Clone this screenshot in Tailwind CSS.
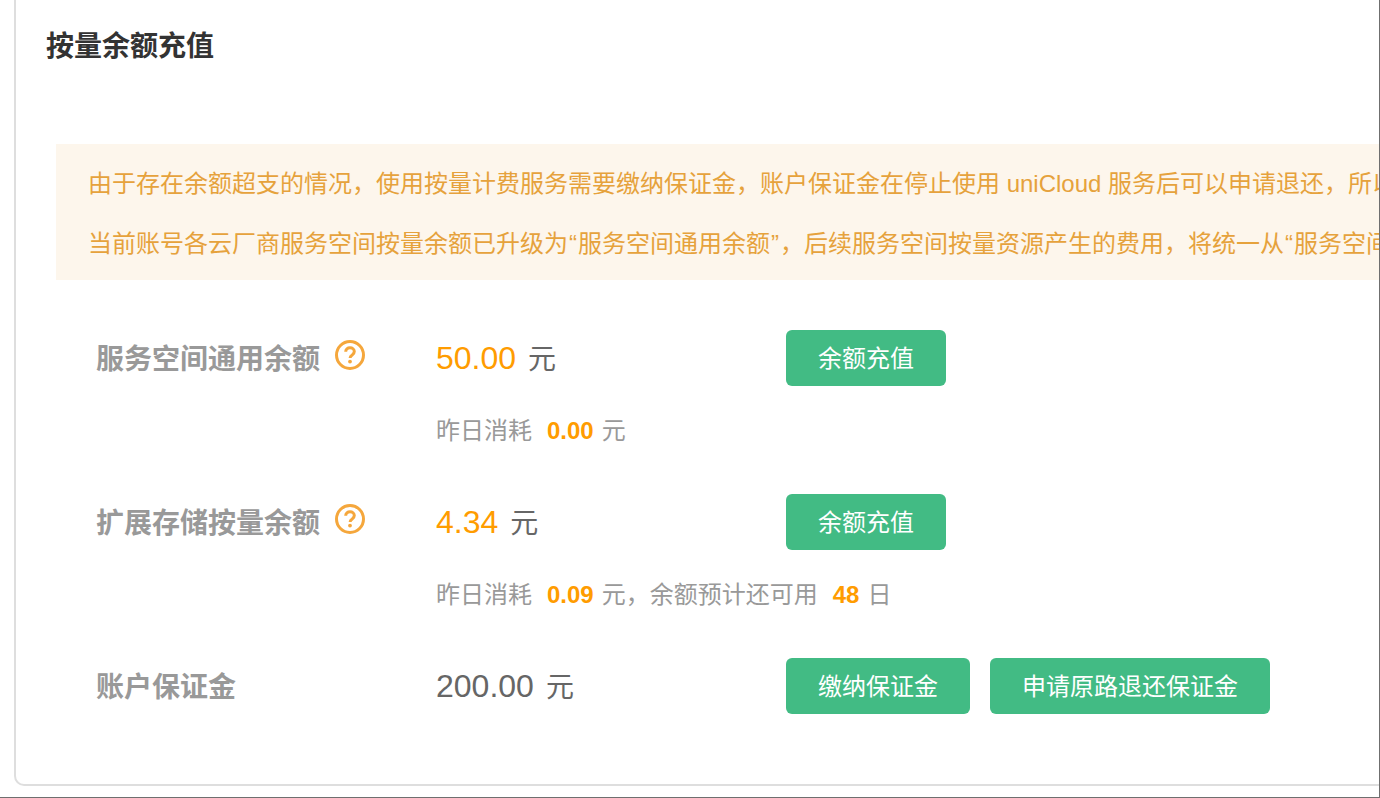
<!DOCTYPE html>
<html lang="zh-CN">
<head>
<meta charset="utf-8">
<script src="https://cdn.jsdelivr.net/npm/@tailwindcss/browser@4"></script>
</head>
<body class="bg-white">
<div class="w-[1380px] h-[798px] overflow-hidden bg-white border-r border-b border-[#6f6f6f] font-['Liberation_Sans','Noto_Sans_CJK_SC',sans-serif] pl-[14px]">
  <div class="w-[1400px] h-[786px] border-2 border-t-0 border-r-0 border-[#dedede] rounded-bl-[10px]">
    <h2 class="pl-[30px] pt-[27px] h-[144px] text-[28px] leading-[40px] font-bold text-[#333]">按量余额充值</h2>
    <div class="ml-[40px] h-[136px] bg-[#fdf6ec] pt-[10px] pl-[32px] text-[24px] leading-[60px] text-[#e6a23c] whitespace-nowrap overflow-hidden">
      <p>由于存在余额超支的情况，使用按量计费服务需要缴纳保证金，账户保证金在停止使用 uniCloud 服务后可以申请退还，所以</p>
      <p>当前账号各云厂商服务空间按量余额已升级为<span class="mx-[1px]">“</span>服务空间通用余额<span class="mx-[1px]">”</span>，后续服务空间按量资源产生的费用，将统一从<span class="mx-[1px]">“</span>服务空间</p>
    </div>

    <div class="pt-[50px]">
      <div class="h-[56px] flex items-center">
        <div class="w-[420px] pl-[80px] pt-[4px] flex items-center shrink-0">
          <span class="text-[28px] font-bold text-[#999] leading-[40px]">服务空间通用余额</span>
          <svg class="ml-[14px] -mt-[10px]" width="32" height="32" viewBox="0 0 32 32" fill="none"><circle cx="16" cy="16" r="13.5" stroke="#f5a73c" stroke-width="3"/><path d="M11.7 12.8c0-2.5 1.9-4 4.3-4s4.3 1.5 4.3 3.7c0 1.6-.8 2.5-2.1 3.4-1.4.9-2.1 1.6-2.1 3" stroke="#f5a73c" stroke-width="3" fill="none"/><circle cx="16" cy="22.6" r="1.9" fill="#f5a73c"/></svg>
        </div>
        <div class="w-[350px] shrink-0 flex items-baseline">
          <span class="text-[32px] text-[#ff9c00]">50.00</span>
          <span class="ml-[12px] text-[28px] text-[#666]">元</span>
        </div>
        <button class="w-[160px] h-[56px] pt-[2px] bg-[#42bb84] rounded-[6px] text-white text-[24px]">余额充值</button>
      </div>
      <div class="h-[108px] pl-[420px] pt-[28px] text-[24px] leading-[34px] text-[#999]">昨日消耗<span class="ml-[15px] font-bold text-[#ff9c00]">0.00</span><span class="ml-[8px]">元</span></div>

      <div class="h-[56px] flex items-center">
        <div class="w-[420px] pl-[80px] pt-[4px] flex items-center shrink-0">
          <span class="text-[28px] font-bold text-[#999] leading-[40px]">扩展存储按量余额</span>
          <svg class="ml-[14px] -mt-[10px]" width="32" height="32" viewBox="0 0 32 32" fill="none"><circle cx="16" cy="16" r="13.5" stroke="#f5a73c" stroke-width="3"/><path d="M11.7 12.8c0-2.5 1.9-4 4.3-4s4.3 1.5 4.3 3.7c0 1.6-.8 2.5-2.1 3.4-1.4.9-2.1 1.6-2.1 3" stroke="#f5a73c" stroke-width="3" fill="none"/><circle cx="16" cy="22.6" r="1.9" fill="#f5a73c"/></svg>
        </div>
        <div class="w-[350px] shrink-0 flex items-baseline">
          <span class="text-[32px] text-[#ff9c00]">4.34</span>
          <span class="ml-[12px] text-[28px] text-[#666]">元</span>
        </div>
        <button class="w-[160px] h-[56px] pt-[2px] bg-[#42bb84] rounded-[6px] text-white text-[24px]">余额充值</button>
      </div>
      <div class="h-[108px] pl-[420px] pt-[28px] text-[24px] leading-[34px] text-[#999]">昨日消耗<span class="ml-[15px] font-bold text-[#ff9c00]">0.09</span><span class="ml-[8px]">元，余额预计还可用</span><span class="ml-[15px] font-bold text-[#ff9c00]">48</span><span class="ml-[8px]">日</span></div>

      <div class="h-[56px] flex items-center">
        <div class="w-[420px] pl-[80px] pt-[4px] shrink-0">
          <span class="text-[28px] font-bold text-[#999] leading-[40px]">账户保证金</span>
        </div>
        <div class="w-[350px] shrink-0 flex items-baseline">
          <span class="text-[32px] text-[#666]">200.00</span>
          <span class="ml-[12px] text-[28px] text-[#666]">元</span>
        </div>
        <button class="w-[184px] h-[56px] pt-[2px] bg-[#42bb84] rounded-[6px] text-white text-[24px]">缴纳保证金</button>
        <button class="ml-[20px] w-[280px] h-[56px] pt-[2px] bg-[#42bb84] rounded-[6px] text-white text-[24px]">申请原路退还保证金</button>
      </div>
    </div>
  </div>
</div>
</body>
</html>
